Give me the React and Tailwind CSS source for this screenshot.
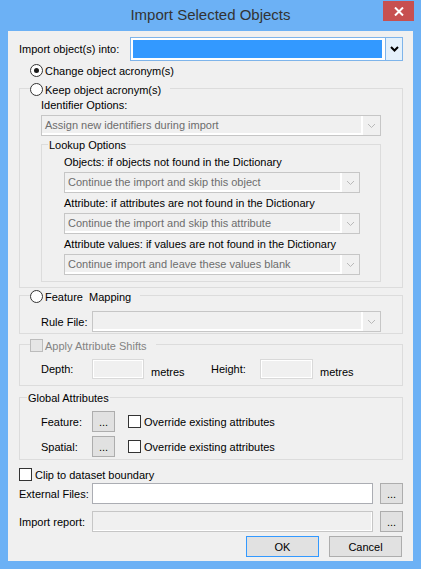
import React from "react";

// small drop-down arrow
const Chevron = ({ disabled }) => (
  <svg width="9" height="6" viewBox="0 0 9 6">
    <path
      d="M1 1 L4.5 4.5 L8 1"
      fill="none"
      stroke={disabled ? "#b9b9b9" : "#000"}
      strokeWidth={disabled ? 1 : 2}
    />
  </svg>
);

const Radio = ({ checked }) => (
  <span className="w-[13px] h-[13px] rounded-full border border-[#333] bg-white flex items-center justify-center shrink-0">
    {checked && <span className="w-[5px] h-[5px] rounded-full bg-[#1a1a1a]" />}
  </span>
);

const Check = ({ disabled, className = "" }) => (
  <span
    className={`block w-[13px] h-[13px] border shrink-0 ${
      disabled ? "border-[#bcbcbc] bg-[#e6e6e6]" : "border-[#333] bg-white"
    } ${className}`}
  />
);

const Btn = ({ children, className = "", focused }) => (
  <div
    className={`h-[21px] flex items-center justify-center border bg-[#e1e1e1] shrink-0 ${
      focused ? "border-[#3399ff]" : "border-[#adadad]"
    } ${className}`}
  >
    {children}
  </div>
);

const DisabledCombo = ({ text, className = "" }) => (
  <div className={`flex h-[21px] border border-[#c6c6c6] bg-[#f0f0f0] ${className}`}>
    <div className="flex-1 flex items-center pl-[3px] text-[#6d6d6d] border-r-2 border-b-2 border-white">
      {text}
    </div>
    <div className="w-[17px] flex items-center justify-center">
      <Chevron disabled />
    </div>
  </div>
);

const MainCombo = () => (
  <div className="flex-1 h-[24px] flex border border-[#7eb4ea] bg-white">
    <div className="flex-1 m-[2px] mr-[3px] bg-[#3399ff]" />
    <div className="w-[17px] bg-[#e5f1fb] border-l border-[#7eb4ea] flex items-center justify-center">
      <Chevron />
    </div>
  </div>
);

const App = () => {
  return (
    <div className="w-[421px] h-[569px] bg-[#6cb1f5] flex flex-col font-['Liberation_Sans',Arial,sans-serif] select-none">
      {/* Title bar */}
      <div className="h-[31px] relative flex items-center justify-center pb-[1px]">
        <span className="text-[15px] text-[#333]">Import Selected Objects</span>
        <div className="absolute top-[1px] right-[7px] w-[31px] h-[20px] bg-[#c75050] flex items-center justify-center">
          <svg width="10" height="9" viewBox="0 0 10 9">
            <path d="M1 0.5 L9 8.5 M9 0.5 L1 8.5" stroke="#fff" strokeWidth="2" />
          </svg>
        </div>
      </div>

      {/* Client area */}
      <div className="mx-[8px] h-[530px] bg-[#f0f0f0] pl-[11px] pr-[10px] pt-[6px] flex flex-col text-[11px] leading-[14px] text-black">
        <div className="flex items-center h-[24px]">
          <span className="w-[111px] shrink-0">Import object(s) into:</span>
          <MainCombo />
        </div>

        <div className="mt-[3px] ml-[11px] flex items-center gap-[2px] h-[13px]">
          <Radio checked />
          <span>Change object acronym(s)</span>
        </div>

        {/* Keep object acronym(s) */}
        <div className="mt-[11px] border border-[#dcdcdc] pb-[5px]">
          <div className="-mt-[6px] ml-[10px] w-fit pr-[9px] bg-[#f0f0f0] flex items-center gap-[2px] h-[13px]">
            <Radio />
            <span>Keep object acronym(s)</span>
          </div>
          <div className="mt-[2px] ml-[21px] h-[14px]">Identifier Options:</div>
          <DisabledCombo text="Assign new identifiers during import" className="mt-[3px] mx-[21px]" />

          <div className="mt-[8px] mx-[21px] border border-[#dcdcdc] pb-[6px]">
            <div className="-mt-[7px] ml-[6px] px-[1px] w-fit bg-[#f0f0f0] h-[14px]">Lookup Options</div>
            <div className="mt-[3px] ml-[22px] h-[14px]">Objects: if objects not found in the Dictionary</div>
            <DisabledCombo text="Continue the import and skip this object" className="mt-[3px] ml-[22px] mr-[20px]" />
            <div className="mt-[3px] ml-[22px] h-[14px]">Attribute: if attributes are not found in the Dictionary</div>
            <DisabledCombo text="Continue the import and skip this attribute" className="mt-[3px] ml-[22px] mr-[20px]" />
            <div className="mt-[3px] ml-[22px] h-[14px]">Attribute values: if values are not found in the Dictionary</div>
            <DisabledCombo text="Continue import and leave these values blank" className="mt-[3px] ml-[22px] mr-[20px]" />
          </div>
        </div>

        {/* Feature Mapping */}
        <div className="mt-[7px] border border-[#dcdcdc] pb-[1px]">
          <div className="-mt-[6px] ml-[10px] w-fit pr-[9px] bg-[#f0f0f0] flex items-center gap-[2px] h-[13px]">
            <Radio />
            <span className="whitespace-pre">Feature  Mapping</span>
          </div>
          <div className="mt-[8px] mx-[21px] flex items-center h-[21px]">
            <span className="w-[51px] shrink-0">Rule File:</span>
            <DisabledCombo text="" className="flex-1" />
          </div>
        </div>

        {/* Apply Attribute Shifts */}
        <div className="mt-[10px] border border-[#dcdcdc] pb-[6px]">
          <div className="-mt-[6px] ml-[10px] w-fit pr-[9px] bg-[#f0f0f0] flex items-center gap-[2px] h-[13px]">
            <Check disabled />
            <span className="text-[#838383]">Apply Attribute Shifts</span>
          </div>
          <div className="mt-[7px] ml-[21px] flex items-center h-[20px]">
            <span className="w-[51px] shrink-0">Depth:</span>
            <div className="w-[52px] h-[20px] shrink-0 border border-[#d9d9d9] bg-[#f0f0f0] shadow-[inset_0_0_0_1px_#fff]" />
            <span className="w-[67px] shrink-0 pl-[7px] mt-[6px]">metres</span>
            <span className="w-[49px] shrink-0">Height:</span>
            <div className="w-[53px] h-[20px] shrink-0 border border-[#d9d9d9] bg-[#f0f0f0] shadow-[inset_0_0_0_1px_#fff]" />
            <span className="pl-[7px] mt-[6px]">metres</span>
          </div>
        </div>

        {/* Global Attributes */}
        <div className="mt-[11px] border border-[#dcdcdc] pb-[2px]">
          <div className="-mt-[7px] ml-[7px] px-[1px] w-fit bg-[#f0f0f0] h-[14px]">Global Attributes</div>
          <div className="mt-[6px] ml-[21px] flex items-center h-[21px]">
            <span className="w-[51px] shrink-0">Feature:</span>
            <Btn className="w-[23px]">...</Btn>
            <Check className="ml-[13px]" />
            <span className="ml-[3px]">Override existing attributes</span>
          </div>
          <div className="mt-[4px] ml-[21px] flex items-center h-[21px]">
            <span className="w-[51px] shrink-0">Spatial:</span>
            <Btn className="w-[23px]">...</Btn>
            <Check className="ml-[13px]" />
            <span className="ml-[3px]">Override existing attributes</span>
          </div>
        </div>

        <div className="mt-[8px] flex items-center gap-[3px] h-[13px]">
          <Check />
          <span>Clip to dataset boundary</span>
        </div>

        <div className="mt-[2px] flex items-center h-[21px]">
          <span className="w-[73px] shrink-0">External Files:</span>
          <div className="flex-1 h-[21px] border border-[#abadb3] bg-white" />
          <Btn className="w-[23px] ml-[7px]">...</Btn>
        </div>

        <div className="mt-[7px] flex items-center h-[21px]">
          <span className="w-[73px] shrink-0">Import report:</span>
          <div className="flex-1 h-[21px] border border-[#c6c6c6] bg-[#f0f0f0] shadow-[inset_-1px_-1px_0_#fff]" />
          <Btn className="w-[23px] ml-[7px]">...</Btn>
        </div>

        <div className="mt-[4px] flex justify-end gap-[10px] mr-[1px]">
          <Btn focused className="w-[73px]">OK</Btn>
          <Btn className="w-[73px]">Cancel</Btn>
        </div>
      </div>
    </div>
  );
};

export default App;
